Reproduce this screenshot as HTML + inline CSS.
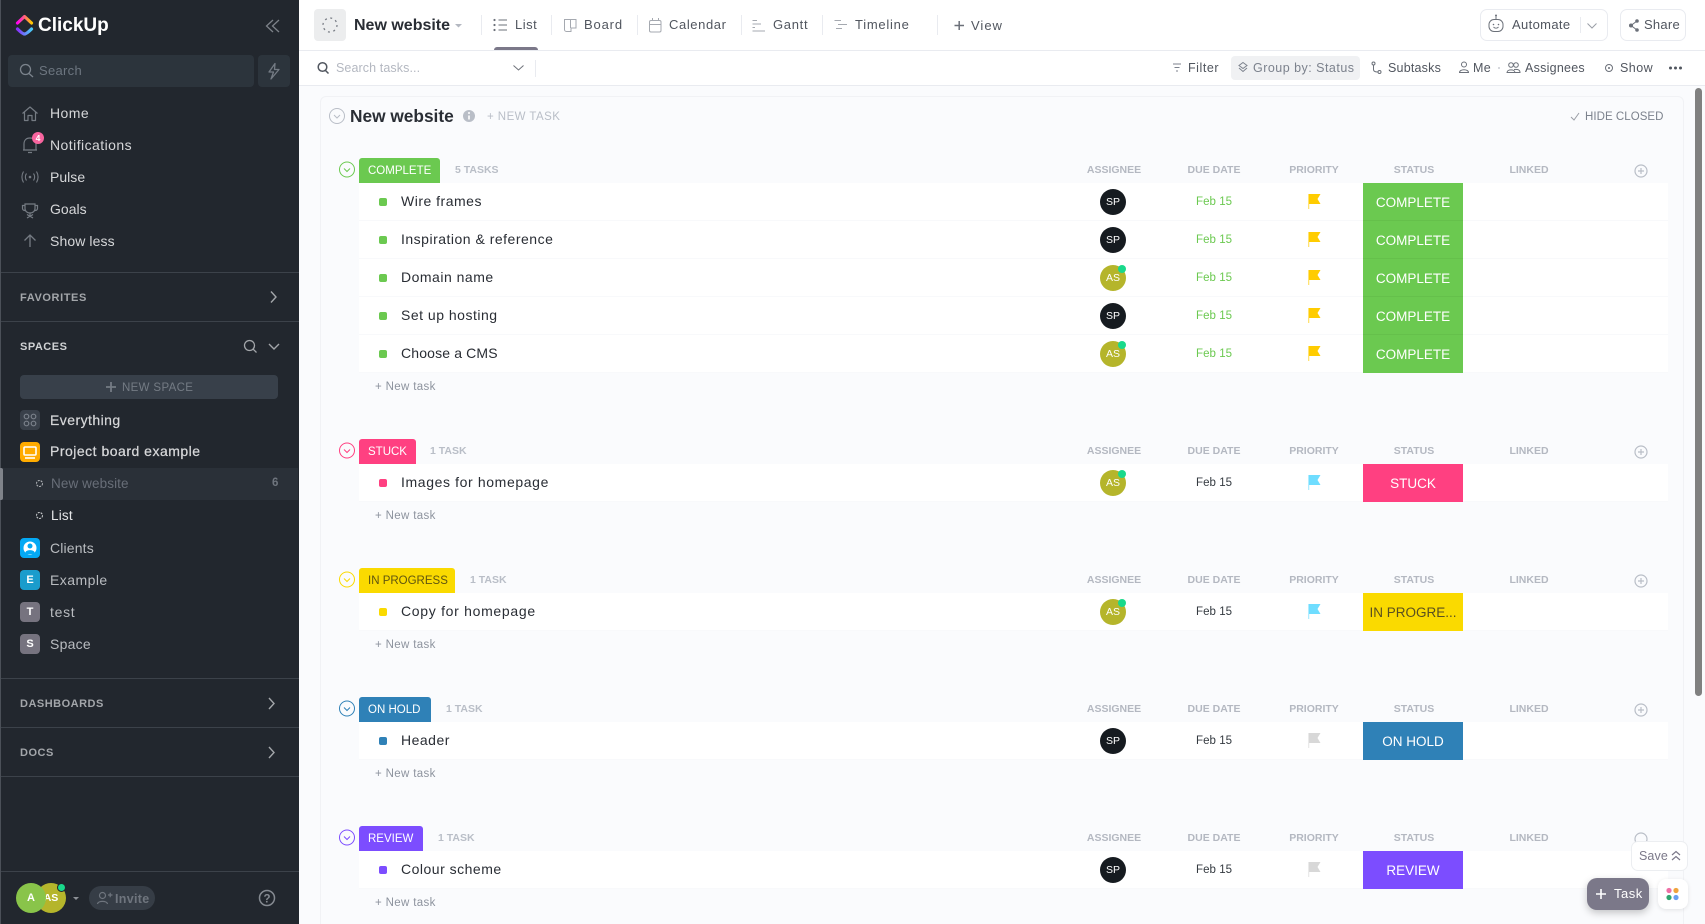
<!DOCTYPE html>
<html lang="en"><head><meta charset="utf-8"><title>New website</title>
<style>
html{margin:0;padding:0;width:1705px;height:924px;overflow:hidden}
body{margin:0;padding:0;width:1705px;height:924px;overflow:hidden;position:relative;background:#fafbfd;font-family:"Liberation Sans",sans-serif;color:#292d34}
#wrap{position:absolute;left:0;top:0;width:1705px;height:924px;overflow:hidden}
div,span{box-sizing:border-box}
.t{position:absolute;white-space:nowrap;line-height:20px;height:20px}
.c{transform:translateX(-50%)}
#side{position:absolute;left:0;top:0;width:299px;height:924px;background:#22272e;border-left:1px solid #4b5058}
.hr{position:absolute;left:0;width:298px;height:1px;background:#3c424a}
.nav{font-size:14px;letter-spacing:.45px;color:#d6d7d9;left:49px}
.sec{font-size:11px;font-weight:bold;letter-spacing:.5px;color:#a3a6aa;left:19px}
.sq{position:absolute;left:19px;width:20px;height:20px;border-radius:4px;color:#fff;font-weight:bold;font-size:11px;line-height:20px;text-align:center}
.tab{font-size:13px;letter-spacing:.6px;color:#51565f}
.tb{font-size:12.5px;letter-spacing:.35px;color:#51565f}
.vl{position:absolute;width:1px;background:#e9ebf0}
.g{position:absolute;left:0;width:1705px;height:98px}
.tag{position:absolute;left:359px;top:0;height:25px;border-radius:3px 3px 0 0;color:#fff;font-size:11.5px;line-height:26.5px;padding-left:9px}
.cnt{font-size:10.5px;font-weight:bold;color:#b9bec7;top:1.5px}
.h{font-size:10.5px;font-weight:bold;color:#b4b8c1;top:1.5px}
.r{position:absolute;left:359px;width:1309px;height:38px;background:#fff;border-bottom:1px solid #f8f9fb}
.d{position:absolute;left:20px;top:15px;width:8px;height:8px;border-radius:2px}
.n{left:42px;top:8px;font-size:14px;letter-spacing:.5px;color:#292d34}
.a{position:absolute;left:741px;top:6px;width:26px;height:26px;border-radius:50%;color:#fff;font-size:10.5px;line-height:26px;text-align:center}
.o{position:absolute;right:0;top:0;width:8px;height:8px;border-radius:50%;background:#19d98b}
.dt{left:837px;top:9px;font-size:11.5px;letter-spacing:.05px;color:#343a40}
.s{position:absolute;left:1004px;top:0;width:100px;height:38px;color:#fff;font-size:13.5px;line-height:40px;text-align:center}
.nt{font-size:11.5px;letter-spacing:.35px;color:#8d939e;left:375px}
</style></head><body><div id="wrap">

<div style="position:absolute;left:299px;top:0;width:1406px;height:51px;background:#fff;border-bottom:1px solid #e9ebf0"></div>
<div style="position:absolute;left:299px;top:51px;width:1406px;height:35px;background:#fff;border-bottom:1px solid #e9ebf0"></div>
<div style="position:absolute;left:320px;top:96px;width:1364px;height:840px;background:#fafbfd;border:1px solid #f1f2f5;border-radius:6px"></div>

<div style="position:absolute;left:314px;top:9px;width:32px;height:32px;background:#ecedee;border-radius:4px"></div>
<span class="t" style="left:354px;top:16px;font-size:16px;font-weight:bold;color:#292d34">New website</span>
<div class="vl" style="left:481px;top:15px;height:20px"></div>
<div class="vl" style="left:551px;top:15px;height:20px"></div>
<div class="vl" style="left:637px;top:15px;height:20px"></div>
<div class="vl" style="left:741px;top:15px;height:20px"></div>
<div class="vl" style="left:822px;top:15px;height:20px"></div>
<div class="vl" style="left:937px;top:15px;height:20px"></div>
<span class="t tab" style="left:515px;top:15px;letter-spacing:.5px">List</span>
<div style="position:absolute;left:494px;top:47px;width:44px;height:3px;background:#7b7889;border-radius:3px 3px 0 0"></div>
<span class="t tab" style="left:584px;top:15px;letter-spacing:.85px">Board</span>
<span class="t tab" style="left:669px;top:15px">Calendar</span>
<span class="t tab" style="left:773px;top:15px;letter-spacing:.7px">Gantt</span>
<span class="t tab" style="left:855px;top:15px;letter-spacing:.75px">Timeline</span>
<span class="t tab" style="left:971px;top:16px;letter-spacing:1px">View</span>

<div style="position:absolute;left:1480px;top:9px;width:128px;height:32px;border:1px solid #e9ebf0;border-radius:7px"></div>
<span class="t tab" style="left:1512px;top:15px;letter-spacing:.35px">Automate</span>
<div class="vl" style="left:1580px;top:17px;height:16px"></div>
<div style="position:absolute;left:1620px;top:9px;width:66px;height:32px;border:1px solid #e9ebf0;border-radius:7px"></div>
<span class="t tab" style="left:1644px;top:15px;letter-spacing:.25px">Share</span>

<span class="t" style="left:336px;top:58px;font-size:12.5px;letter-spacing:.1px;color:#b4b8c1">Search tasks...</span>
<div class="vl" style="left:535px;top:60px;height:17px"></div>
<span class="t tb" style="left:1188px;top:58px;letter-spacing:.55px">Filter</span>
<div style="position:absolute;left:1231px;top:56px;width:129px;height:24px;background:#f0f1f3;border-radius:4px"></div>
<span class="t tb" style="left:1253px;top:58px;color:#7c828d;letter-spacing:.48px">Group by: Status</span>
<span class="t tb" style="left:1388px;top:58px;letter-spacing:.2px">Subtasks</span>
<span class="t tb" style="left:1473px;top:58px">Me</span>
<span class="t tb" style="left:1525px;top:58px;letter-spacing:.25px">Assignees</span>
<span class="t tb" style="left:1620px;top:58px;letter-spacing:.45px">Show</span>

<span class="t" style="left:350px;top:106px;font-size:17.3px;font-weight:bold;color:#292d34">New website</span>
<span class="t" style="left:487px;top:107px;font-size:11.5px;letter-spacing:.45px;color:#b9bec7">+ NEW TASK</span>
<span class="t" style="left:1585px;top:107px;font-size:11.5px;color:#7c828d;letter-spacing:.05px">HIDE CLOSED</span>
<div style="position:absolute;left:1695px;top:88px;width:7px;height:608px;background:#808080;border-radius:4px"></div>

<div class="g" style="top:158px;height:240px">
<div class="tag" style="width:81px;background:#6bc950">COMPLETE</div>
<span class="t cnt" style="left:455px">5 TASKS</span>
<span class="t h c" style="left:1114px">ASSIGNEE</span><span class="t h c" style="left:1214px">DUE DATE</span><span class="t h c" style="left:1314px">PRIORITY</span><span class="t h c" style="left:1414px">STATUS</span><span class="t h c" style="left:1529px">LINKED</span>
<div class="r" style="top:25px"><i class="d" style="background:#6bc950"></i><span class="t n">Wire frames</span><div class="a" style="background:#161b20">SP</div><span class="t dt" style="color:#6bc950">Feb 15</span><div class="s" style="background:#6bc950;border-bottom:1px solid #65c04b">COMPLETE</div></div>
<div class="r" style="top:63px"><i class="d" style="background:#6bc950"></i><span class="t n">Inspiration &amp; reference</span><div class="a" style="background:#161b20">SP</div><span class="t dt" style="color:#6bc950">Feb 15</span><div class="s" style="background:#6bc950;border-bottom:1px solid #65c04b">COMPLETE</div></div>
<div class="r" style="top:101px"><i class="d" style="background:#6bc950"></i><span class="t n">Domain name</span><div class="a" style="background:#b5b52b">AS<i class="o"></i></div><span class="t dt" style="color:#6bc950">Feb 15</span><div class="s" style="background:#6bc950;border-bottom:1px solid #65c04b">COMPLETE</div></div>
<div class="r" style="top:139px"><i class="d" style="background:#6bc950"></i><span class="t n">Set up hosting</span><div class="a" style="background:#161b20">SP</div><span class="t dt" style="color:#6bc950">Feb 15</span><div class="s" style="background:#6bc950;border-bottom:1px solid #65c04b">COMPLETE</div></div>
<div class="r" style="top:177px"><i class="d" style="background:#6bc950"></i><span class="t n" style="letter-spacing:.15px">Choose a CMS</span><div class="a" style="background:#b5b52b">AS<i class="o"></i></div><span class="t dt" style="color:#6bc950">Feb 15</span><div class="s" style="background:#6bc950">COMPLETE</div></div>
<span class="t nt" style="top:219px">+ New task</span>
</div>

<div class="g" style="top:439px">
<div class="tag" style="width:57px;background:#ff4081">STUCK</div>
<span class="t cnt" style="left:430px">1 TASK</span>
<span class="t h c" style="left:1114px">ASSIGNEE</span><span class="t h c" style="left:1214px">DUE DATE</span><span class="t h c" style="left:1314px">PRIORITY</span><span class="t h c" style="left:1414px">STATUS</span><span class="t h c" style="left:1529px">LINKED</span>
<div class="r" style="top:25px"><i class="d" style="background:#ff4081"></i><span class="t n" style="letter-spacing:.62px">Images for homepage</span><div class="a" style="background:#b5b52b">AS<i class="o"></i></div><span class="t dt">Feb 15</span><div class="s" style="background:#ff4081">STUCK</div></div>
<span class="t nt" style="top:67px">+ New task</span>
</div>

<div class="g" style="top:568px">
<div class="tag" style="width:96px;background:#fada00;color:#5f5510">IN PROGRESS</div>
<span class="t cnt" style="left:470px">1 TASK</span>
<span class="t h c" style="left:1114px">ASSIGNEE</span><span class="t h c" style="left:1214px">DUE DATE</span><span class="t h c" style="left:1314px">PRIORITY</span><span class="t h c" style="left:1414px">STATUS</span><span class="t h c" style="left:1529px">LINKED</span>
<div class="r" style="top:25px"><i class="d" style="background:#fada00"></i><span class="t n" style="letter-spacing:.7px">Copy for homepage</span><div class="a" style="background:#b5b52b">AS<i class="o"></i></div><span class="t dt">Feb 15</span><div class="s" style="background:#fada00;color:#5a5020">IN PROGRE...</div></div>
<span class="t nt" style="top:67px">+ New task</span>
</div>

<div class="g" style="top:697px">
<div class="tag" style="width:72px;background:#2f81b7">ON HOLD</div>
<span class="t cnt" style="left:446px">1 TASK</span>
<span class="t h c" style="left:1114px">ASSIGNEE</span><span class="t h c" style="left:1214px">DUE DATE</span><span class="t h c" style="left:1314px">PRIORITY</span><span class="t h c" style="left:1414px">STATUS</span><span class="t h c" style="left:1529px">LINKED</span>
<div class="r" style="top:25px"><i class="d" style="background:#2f81b7"></i><span class="t n">Header</span><div class="a" style="background:#161b20">SP</div><span class="t dt">Feb 15</span><div class="s" style="background:#2f81b7">ON HOLD</div></div>
<span class="t nt" style="top:67px">+ New task</span>
</div>

<div class="g" style="top:826px">
<div class="tag" style="width:64px;background:#7c4dff">REVIEW</div>
<span class="t cnt" style="left:438px">1 TASK</span>
<span class="t h c" style="left:1114px">ASSIGNEE</span><span class="t h c" style="left:1214px">DUE DATE</span><span class="t h c" style="left:1314px">PRIORITY</span><span class="t h c" style="left:1414px">STATUS</span><span class="t h c" style="left:1529px">LINKED</span>
<div class="r" style="top:25px"><i class="d" style="background:#7c4dff"></i><span class="t n">Colour scheme</span><div class="a" style="background:#161b20">SP</div><span class="t dt">Feb 15</span><div class="s" style="background:#7c4dff">REVIEW</div></div>
<span class="t nt" style="top:67px">+ New task</span>
</div>

<!-- sidebar -->
<div id="side">
<span class="t" style="left:37px;top:16px;font-size:19px;font-weight:bold;color:#fff">ClickUp</span>
<div style="position:absolute;left:7px;top:55px;width:246px;height:32px;background:#2c343c;border-radius:4px"></div>
<div style="position:absolute;left:257px;top:55px;width:32px;height:32px;background:#2c343c;border-radius:4px"></div>
<span class="t" style="left:38px;top:61px;font-size:13px;letter-spacing:.3px;color:#6d7680">Search</span>
<span class="t nav" style="top:103px">Home</span>
<span class="t nav" style="top:135px">Notifications</span>
<span class="t nav" style="top:167px;letter-spacing:.02px">Pulse</span>
<span class="t nav" style="top:199px;letter-spacing:.02px">Goals</span>
<span class="t nav" style="top:231px;letter-spacing:.1px">Show less</span>
<div class="hr" style="top:272px"></div>
<span class="t sec" style="top:288px;letter-spacing:.6px">FAVORITES</span>
<div class="hr" style="top:321px"></div>
<span class="t sec" style="top:337px;color:#d0d2d4">SPACES</span>
<div style="position:absolute;left:19px;top:375px;width:258px;height:24px;background:#38404a;border-radius:4px"></div>
<span class="t" style="left:121px;top:378px;font-size:11.5px;letter-spacing:.35px;color:#747b84">NEW SPACE</span>
<div class="sq" style="top:410px;background:#39404a"></div>
<span class="t nav" style="top:410px;-webkit-text-stroke:.2px #d6d7d9">Everything</span>
<div class="sq" style="top:442px;background:#ffab00"></div>
<span class="t nav" style="top:441px;letter-spacing:.5px;-webkit-text-stroke:.25px #d6d7d9">Project board example</span>
<div style="position:absolute;left:-1px;top:468px;width:298px;height:32px;background:#2a3038"></div>
<div style="position:absolute;left:-1px;top:468px;width:3px;height:32px;background:#7f838a;border-radius:0 2px 2px 0"></div>
<span class="t nav" style="left:50px;top:474px;color:#686e78;font-size:13.5px;letter-spacing:.1px">New website</span>
<span class="t" style="left:271px;top:473px;font-size:11.5px;color:#6f757e;font-weight:bold">6</span>
<span class="t nav" style="left:50px;top:506px;color:#e4e5e7;font-size:13.5px;letter-spacing:.2px">List</span>
<div class="sq" style="top:538px;background:#04a9f4"></div>
<span class="t nav" style="top:538px;color:#b9bcc0;letter-spacing:.15px">Clients</span>
<div class="sq" style="top:570px;background:#1a9ccc">E</div>
<span class="t nav" style="top:570px;color:#b9bcc0">Example</span>
<div class="sq" style="top:602px;background:#76737f">T</div>
<span class="t nav" style="top:602px;color:#b9bcc0;letter-spacing:.7px">test</span>
<div class="sq" style="top:634px;background:#76737f">S</div>
<span class="t nav" style="top:634px;color:#b9bcc0;letter-spacing:.25px">Space</span>
<div class="hr" style="top:678px"></div>
<span class="t sec" style="top:694px">DASHBOARDS</span>
<div class="hr" style="top:727px"></div>
<span class="t sec" style="top:743px">DOCS</span>
<div class="hr" style="top:776px"></div>
<div class="hr" style="top:871px"></div>
<div style="position:absolute;left:35px;top:883px;width:30px;height:30px;border-radius:50%;background:#b5b52b;color:#fff;font-size:10.5px;font-weight:bold;line-height:30px;text-align:center">AS</div>
<div style="position:absolute;left:15px;top:883px;width:30px;height:30px;border-radius:50%;background:#89c44a;color:#fff;font-size:11px;font-weight:bold;line-height:30px;text-align:center">A</div>
<div style="position:absolute;left:56px;top:883px;width:9px;height:9px;border-radius:50%;background:#19d98b;border:1px solid #22272e"></div>
<div style="position:absolute;left:88px;top:886px;width:66px;height:24px;border-radius:12px;background:#363d46"></div>
<span class="t" style="left:114px;top:889px;font-size:12.5px;font-weight:bold;letter-spacing:.3px;color:#6f757e">Invite</span>
</div>

<!-- icon layer -->
<svg style="position:absolute;left:0;top:0" width="1705" height="924" viewBox="0 0 1705 924" fill="none">
<defs>
<linearGradient id="lg1" x1="0" x2="1" y1="0" y2="0"><stop offset="0" stop-color="#ff02f0"/><stop offset="1" stop-color="#ffc800"/></linearGradient>
<linearGradient id="lg2" x1="0" x2="1" y1="0" y2="0"><stop offset="0" stop-color="#8930fd"/><stop offset="1" stop-color="#49ccf9"/></linearGradient>
<g id="fl"><path d="M1309 11H1320.5L1317.5 16L1320.5 21H1309Z"/><rect x="1308" y="11" width="1.3" height="15" opacity=".55"/></g>
</defs>
<!-- logo -->
<path d="M17.5 23L24.5 16.5L31.5 23" stroke="url(#lg1)" stroke-width="3.2" stroke-linejoin="round" stroke-linecap="round"/>
<path d="M17.5 29C21 32.5 23 34 24.5 34C26 34 28 32.500 31.5 29" stroke="url(#lg2)" stroke-width="3.2" stroke-linecap="round"/>
<path d="M273 20L266.5 26L273 32M279 20L272.5 26L279 32" stroke="#7d8289" stroke-width="1.3"/>
<!-- search -->
<circle cx="25.5" cy="69.5" r="5" stroke="#7c848d" stroke-width="1.3"/><path d="M29 73.5L33 77" stroke="#7c848d" stroke-width="1.3"/>
<path d="M275 63.5L269 72H273.5L271 79L279 69.5H274.5Z" stroke="#747b84" stroke-width="1.3" stroke-linejoin="round"/>
<!-- nav -->
<path d="M22.5 113.5L30 107L37.5 113.5M24.5 112V120.5H28V115.5H32V120.5H35.5V112" stroke="#757b83" stroke-width="1.2" stroke-linejoin="round"/>
<path d="M24 150V144C24 140 26.5 138 30 138C33.5 138 36 140 36 144V150M23 150H37M28 152.500H32" stroke="#757b83" stroke-width="1.2"/>
<circle cx="38" cy="138" r="6" fill="#f8659f"/><text x="38" y="141" font-size="8.5" font-weight="bold" fill="#fff" text-anchor="middle" font-family="Liberation Sans">4</text>
<circle cx="30" cy="177" r="1.3" fill="#757b83"/>
<path d="M26.5 173.5C25 175.5 25 178.5 26.5 180.5M33.5 173.5C35 175.5 35 178.5 33.5 180.5M23.5 171.5C21.5 175 21.5 179 23.5 182.5M36.5 171.5C38.5 175 38.5 179 36.5 182.5" stroke="#757b83" stroke-width="1.1"/>
<path d="M25 204H35V208.5C35 211 33 213 30 213C27 213 25 211 25 208.5ZM25 205.5H22.5V208.5C22.5 209.5 23.5 210.5 25 210.5M35 205.5H37.5V208.5C37.5 209.5 36.5 210.5 35 210.5M30 213V215.5M27 218L33 214.5M33 218L27 214.5" stroke="#757b83" stroke-width="1.2"/>
<path d="M30 247V235M24.5 240.5L30 235L35.5 240.5" stroke="#757b83" stroke-width="1.3"/>
<!-- sections -->
<path d="M271 291.5L276 297L271 302.5" stroke="#a3a6aa" stroke-width="1.4"/>
<circle cx="249.5" cy="345.500" r="5" stroke="#a3a6aa" stroke-width="1.3"/><path d="M253 349L256.500 352.500" stroke="#a3a6aa" stroke-width="1.3"/>
<path d="M269 344L274 349L279 344" stroke="#a3a6aa" stroke-width="1.4"/>
<path d="M269 698L274 703.5L269 709" stroke="#a3a6aa" stroke-width="1.4"/>
<path d="M269 747L274 752.5L269 758" stroke="#a3a6aa" stroke-width="1.4"/>
<path d="M106 387H116M111 382V392" stroke="#747b84" stroke-width="1.8"/>
<!-- space icons -->
<g stroke="#7a808a" stroke-width="1.2"><circle cx="26.5" cy="416.5" r="2.3"/><circle cx="33.5" cy="416.5" r="2.3"/><circle cx="26.5" cy="423.5" r="2.3"/><circle cx="33.5" cy="423.5" r="2.3"/></g>
<rect x="24" y="447" width="12" height="8" rx="1" stroke="#fff" stroke-width="1.6"/><path d="M25 458H35" stroke="#fff" stroke-width="1.6"/>
<circle cx="39.5" cy="483.5" r="3" stroke="#b5b8bc" stroke-width="1" stroke-dasharray="2 1"/>
<circle cx="39.5" cy="515.5" r="3" stroke="#d0d2d4" stroke-width="1" stroke-dasharray="2 1"/>
<circle cx="30" cy="548" r="6.5" fill="#fff"/><circle cx="30" cy="546" r="2.5" fill="#04a9f4"/><path d="M25.5 552C27 549.5 33 549.5 34.5 552V554H25.5Z" fill="#04a9f4"/>
<!-- footer -->
<path d="M73 897H79L76 900Z" fill="#8d9197"/>
<circle cx="102.5" cy="895.5" r="3" stroke="#6f757e" stroke-width="1.2"/><path d="M97.5 904C98 900.5 107 900.5 107.5 904M108 895H112.5M110.2 892.8V897.2" stroke="#6f757e" stroke-width="1.2"/>
<circle cx="267" cy="898" r="7.5" stroke="#858a91" stroke-width="1.5"/>
<text x="267" y="902.5" font-size="11.5" font-weight="bold" fill="#858a91" text-anchor="middle" font-family="Liberation Sans">?</text>
<!-- header icons -->
<circle cx="330" cy="25" r="7" stroke="#7b7f87" stroke-width="1.3" stroke-dasharray="2 3.5"/>
<path d="M455 24H462L458.5 27.5Z" fill="#b4b8c1"/>
<g fill="#6b7079"><circle cx="494.5" cy="20" r="1.1"/><circle cx="494.5" cy="25" r="1.1"/><circle cx="494.5" cy="30" r="1.1"/></g>
<path d="M498.5 20H507M498.5 25H507M498.5 30H507" stroke="#6b7079" stroke-width="1.1"/>
<path d="M564.5 19.5H576V28H571V31.5H566.5A2 2 0 0 1 564.5 29.5ZM570.5 19.5V28" stroke="#a5a9b0" stroke-width="1"/>
<path d="M649.5 22A1.5 1.5 0 0 1 651 20.500H659.5A1.5 1.5 0 0 1 661 22V30.5A1.5 1.5 0 0 1 659.5 32H651A1.5 1.5 0 0 1 649.5 30.5ZM649.5 24.5H661M652.5 18V20.5M658.5 18V20.5" stroke="#a5a9b0" stroke-width="1"/>
<path d="M752.5 20.5H757M752.5 24H761M752.5 27.5H755M752.5 31H765" stroke="#a5a9b0" stroke-width="1"/>
<path d="M834.5 20.5H841M838 24.5H847M836 28.5H842" stroke="#a5a9b0" stroke-width="1"/>
<path d="M954.5 25.5H964M959.2 21V30" stroke="#6b7079" stroke-width="1.5"/>
<rect x="1489" y="19.5" width="14" height="12" rx="5" stroke="#6b7079" stroke-width="1"/><path d="M1496 19.5V16.5" stroke="#6b7079"/><circle cx="1496" cy="15.5" r="1" fill="#6b7079"/><circle cx="1493.5" cy="24.5" r=".8" fill="#6b7079"/><circle cx="1498.5" cy="24.5" r=".8" fill="#6b7079"/><path d="M1493.5 27C1495 28.500 1497 28.500 1498.500 27" stroke="#6b7079" stroke-width=".9"/>
<path d="M1587.5 23.5L1592 28L1596.5 23.5" stroke="#9a9ea6" stroke-width="1"/>
<g fill="#6b7079"><circle cx="1637" cy="21" r="1.8"/><circle cx="1637" cy="30" r="1.8"/><circle cx="1631" cy="25.5" r="2"/></g><path d="M1637 21L1631 25.5L1637 30" stroke="#6b7079"/>
<circle cx="322.5" cy="67" r="4.3" stroke="#51565f" stroke-width="1.5"/><path d="M325 70L328.5 73.5" stroke="#51565f" stroke-width="1.5"/>
<path d="M513.5 65.5L518.5 70L523.5 65.5" stroke="#6d7179" stroke-width="1"/>
<path d="M1173 64H1181M1174.5 67.5H1179.5M1176 71H1178" stroke="#7c828d" stroke-width="1.1"/>
<path d="M1243 62.5L1247 65.5L1243 68.5L1239 65.5ZM1239 68L1243 71.5L1247 68" stroke="#7c828d" stroke-width="1"/>
<circle cx="1373.5" cy="63.5" r="1.5" stroke="#6b7079"/><circle cx="1379.5" cy="72" r="1.500" stroke="#6b7079"/><path d="M1373.5 65V69.500C1373.5 71.500 1375 72 1378 72" stroke="#6b7079"/>
<circle cx="1464" cy="64.5" r="2.5" stroke="#6b7079"/><path d="M1459.5 72.5C1459.5 68.8 1468.5 68.8 1468.5 72.5Z" stroke="#6b7079"/>
<circle cx="1499" cy="68" r="1" fill="#c9ccd2"/>
<circle cx="1511" cy="65" r="2.3" stroke="#6b7079"/><circle cx="1516" cy="65" r="2.3" stroke="#6b7079"/><path d="M1507 72.5C1507 69 1515 69 1515 72.5ZM1512.5 72.5H1520C1520 69.5 1517 69 1514 69.5" stroke="#6b7079"/>
<circle cx="1609" cy="68" r="3.5" stroke="#6b7079"/><circle cx="1609" cy="68" r="1" fill="#6b7079"/>
<g fill="#51565f"><circle cx="1670.5" cy="68" r="1.500"/><circle cx="1675.5" cy="68" r="1.500"/><circle cx="1680.5" cy="68" r="1.500"/></g>
<!-- card title -->
<circle cx="337" cy="116" r="7.5" stroke="#b9bec7"/><path d="M334 115L337 118L340 115" stroke="#b9bec7"/>
<circle cx="469" cy="116" r="6" fill="#b9bec7"/><path d="M469 115.5V119.5" stroke="#fff" stroke-width="1.6"/><circle cx="469" cy="113" r="1" fill="#fff"/>
<path d="M1571 117L1574 120L1579 113" stroke="#9a9ea6" stroke-width="1"/>
<!-- group chevrons -->
<circle cx="347" cy="169.5" r="7.5" stroke="#6bc950"/><path d="M344 168.5L347 171.5L350 168.5" stroke="#6bc950"/>
<circle cx="347" cy="450.5" r="7.5" stroke="#ff4081"/><path d="M344 449.5L347 452.5L350 449.5" stroke="#ff4081"/>
<circle cx="347" cy="579.5" r="7.5" stroke="#fada00"/><path d="M344 578.5L347 581.5L350 578.5" stroke="#fada00"/>
<circle cx="347" cy="708.5" r="7.5" stroke="#2f81b7"/><path d="M344 707.5L347 710.5L350 707.5" stroke="#2f81b7"/>
<circle cx="347" cy="837.5" r="7.5" stroke="#7c4dff"/><path d="M344 836.5L347 839.5L350 836.5" stroke="#7c4dff"/>
<!-- plus circles -->
<g stroke="#b9bec7" stroke-width="1.2"><circle cx="1641" cy="171" r="6"/><path d="M1638 171H1644M1641 168V174"/><circle cx="1641" cy="452" r="6"/><path d="M1638 452H1644M1641 449V455"/><circle cx="1641" cy="581" r="6"/><path d="M1638 581H1644M1641 578V584"/><circle cx="1641" cy="710" r="6"/><path d="M1638 710H1644M1641 707V713"/><circle cx="1641" cy="839" r="6"/></g>
<!-- flags -->
<use href="#fl" y="183" fill="#ffcc00"/><use href="#fl" y="221" fill="#ffcc00"/><use href="#fl" y="259" fill="#ffcc00"/><use href="#fl" y="297" fill="#ffcc00"/><use href="#fl" y="335" fill="#ffcc00"/>
<use href="#fl" y="464" fill="#6fddff"/><use href="#fl" y="593" fill="#6fddff"/>
<use href="#fl" y="722" fill="#d8d8d8"/><use href="#fl" y="851" fill="#d8d8d8"/>
</svg>

<!-- floating -->
<div style="position:absolute;left:1631px;top:841px;width:57px;height:30px;background:#fff;border:1px solid #eceef1;border-radius:7px"></div>
<span class="t" style="left:1639px;top:846px;font-size:12.5px;letter-spacing:.1px;color:#7b7889">Save</span>
<svg style="position:absolute;left:1671px;top:850px" width="10" height="12" fill="none"><path d="M1 5L5 1.5L9 5M1 10L5 6.5L9 10" stroke="#7b7889" stroke-width="1.2"/></svg>
<div style="position:absolute;left:1587px;top:878px;width:62px;height:32px;background:#7b7889;border-radius:10px;box-shadow:0 3px 8px rgba(0,0,0,.22)"></div>
<svg style="position:absolute;left:1595px;top:888px" width="12" height="12" fill="none"><path d="M1 6H11M6 1V11" stroke="#fff" stroke-width="1.6"/></svg>
<span class="t" style="left:1614px;top:884px;font-size:13px;letter-spacing:.5px;color:#fff">Task</span>
<div style="position:absolute;left:1658px;top:879px;width:30px;height:30px;background:#fff;border-radius:8px;box-shadow:0 1px 4px rgba(0,0,0,.1)"></div>
<svg style="position:absolute;left:1664px;top:886px" width="18" height="18"><circle cx="5" cy="4.5" r="2.600" fill="#ee6fa5"/><circle cx="12" cy="4.5" r="2.600" fill="#f0a33c"/><circle cx="5" cy="11.5" r="2.600" fill="#2fa56f"/><circle cx="12" cy="11.5" r="2.600" fill="#6a9ff0"/></svg>
</div></body></html>
